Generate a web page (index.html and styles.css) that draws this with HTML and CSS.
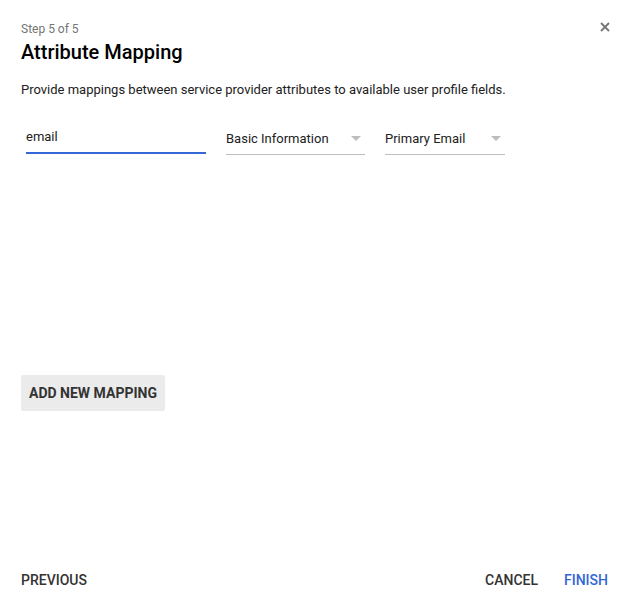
FILE: index.html
```html
<!DOCTYPE html>
<html>
<head>
<meta charset="utf-8">
<link rel="stylesheet" href="styles.css">
</head>
<body>
<div class="dialog">
  <header class="head">
    <div class="titles">
      <div class="step">Step 5 of 5</div>
      <h1 class="title">Attribute Mapping</h1>
    </div>
    <button class="close" aria-label="Close">
      <svg width="10" height="10" viewBox="0 0 10 10"><path d="M1 1L9 9M9 1L1 9" stroke="#757575" stroke-width="1.8"/></svg>
    </button>
  </header>
  <p class="desc">Provide mappings between service provider attributes to available user profile fields.</p>
  <div class="row">
    <div class="field input active">email</div>
    <div class="field select s1"><span>Basic Information</span><i class="arrow"></i></div>
    <div class="field select s2"><span>Primary Email</span><i class="arrow"></i></div>
  </div>
  <div class="add-wrap"><button class="add">ADD NEW MAPPING</button></div>
  <footer class="foot">
    <button class="flat">PREVIOUS</button>
    <div class="right">
      <button class="flat">CANCEL</button>
      <button class="flat primary">FINISH</button>
    </div>
  </footer>
</div>
</body>
</html>
```
FILE: styles.css
```css
* { box-sizing: border-box; }
html, body { margin: 0; padding: 0; background: #fff; }
body { font-family: Roboto, "Noto Sans", Arial, sans-serif; color: #212121; }
.dialog { width: 631px; height: 611px; padding: 0 21px; display: flex; flex-direction: column; }
.head { display: flex; justify-content: space-between; align-items: flex-start; padding-top: 21px; }
.step { font-size: 12px; line-height: 16px; color: #757575; }
.title { margin: 3px 0 0; font-size: 20px; line-height: 24px; font-weight: 500; color: #000; }
.close { border: 0; background: none; padding: 0; margin: 0 -1px 0 0; width: 12px; height: 12px; display: flex; align-items: center; justify-content: center; cursor: pointer; }
.desc { margin: 18px 0 0; font-size: 13px; line-height: 16px; color: #212121; }
.row { display: flex; margin-top: 29px; padding-left: 5px; gap: 20px; align-items: flex-start; }
.field { font-size: 13px; line-height: 16px; color: #212121; }
.input { width: 180px; height: 27px; border-bottom: 2px solid #3367d6; padding-top: 2px; }
.select { border-bottom: 1px solid #bdbdbd; display: flex; justify-content: space-between; padding-top: 4px; height: 28px; }
.s1 { width: 139px; }
.s2 { width: 120px; }
.arrow { width: 0; height: 0; border-left: 5px solid transparent; border-right: 5px solid transparent; border-top: 5px solid #bdbdbd; margin: 5px 4px 0 0; }
.add-wrap { margin-top: 220px; }
.add { border: 0; background: #ebebeb; border-radius: 2px; height: 36px; width: 144px; font-family: inherit; font-size: 14px; font-weight: 700; color: #333; padding: 0; }
.foot { margin-top: auto; display: flex; justify-content: space-between; align-items: center; height: 61px; padding-bottom: 2px; }
.right { display: flex; gap: 26px; margin-right: 2px; }
.flat { border: 0; background: none; padding: 0; font-family: inherit; font-size: 14px; font-weight: 500; color: #333; }
.primary { color: #3367d6; }
```
